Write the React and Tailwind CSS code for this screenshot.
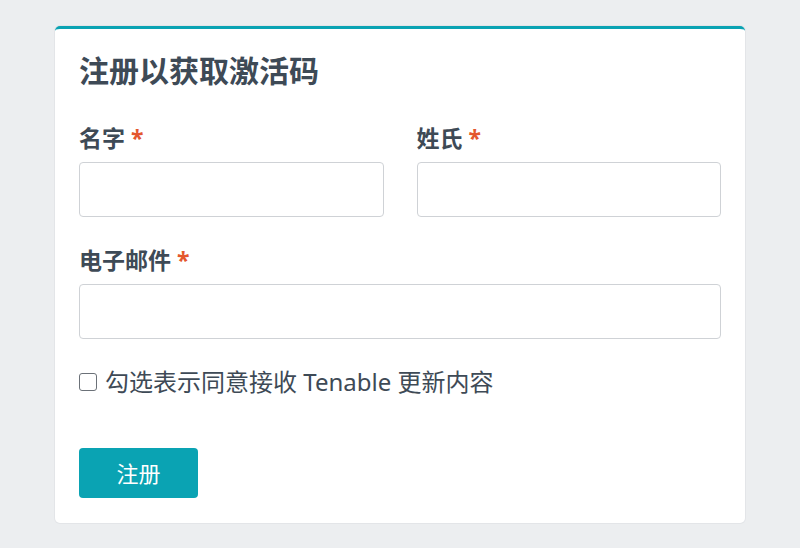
import { useState } from 'react';

const font = { fontFamily: '"Noto Sans", "Noto Sans CJK SC", sans-serif' };

function Field({ label, className = '' }) {
    return (
        <div className={`flex flex-col ${className}`}>
            <label className="text-[23px] font-bold text-[#3e4a56] leading-none mb-[12px]">
                {label} <span className="text-[#e4572e]">*</span>
            </label>
            <input className="h-[55px] w-full rounded-[4px] border border-[#cfd2d6] bg-white outline-none" />
        </div>
    );
}

export default function App() {
    const [agree, setAgree] = useState(false);

    return (
        <div className="min-h-[548px] w-full bg-[#eceef0] px-[55px] pt-[26px] pb-[26px]" style={font}>
            <div className="bg-white rounded-[5px] border-t-[3px] border-[#0aa3b3] shadow-[0_0_0_1px_#e3e5e8] px-[24px] pt-[27px] pb-[25px]">
                <h1 className="text-[30px] font-bold text-[#3e4a56] leading-none mb-[41px]">注册以获取激活码</h1>

                <div className="grid grid-cols-2 gap-x-[33px]">
                    <Field label="名字" />
                    <Field label="姓氏" />
                </div>

                <Field label="电子邮件" className="mt-[32px]" />

                <label className="flex items-center gap-[8px] mt-[31px] text-[24px] text-[#3e4a56] leading-none">
                    <input
                        type="checkbox"
                        checked={agree}
                        onChange={(e) => setAgree(e.target.checked)}
                        className="appearance-none w-[18px] h-[18px] rounded-[3px] border border-[#6b7178] bg-white"
                    />
                    勾选表示同意接收 Tenable 更新内容
                </label>

                <button className="mt-[54px] w-[119px] h-[50px] rounded-[4px] bg-[#0aa3b3] text-white text-[22px] leading-none">
                    注册
                </button>
            </div>
        </div>
    );
}
